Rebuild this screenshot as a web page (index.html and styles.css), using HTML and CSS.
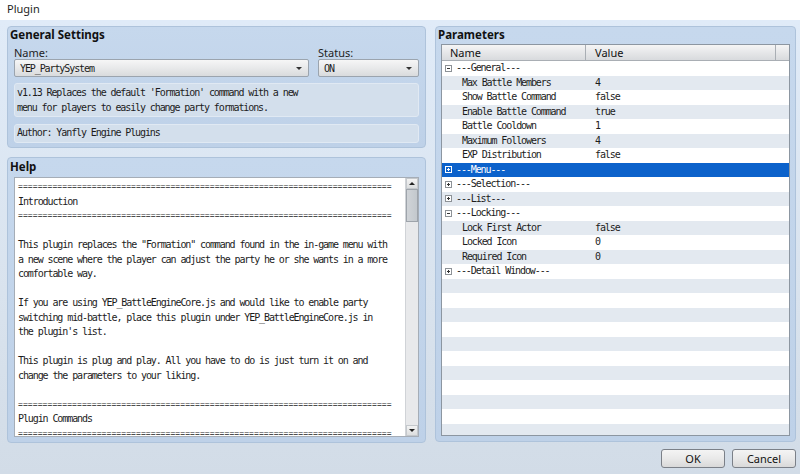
FILE: index.html
```html
<!DOCTYPE html>
<html>
<head>
	<meta charset="UTF-8">
	<title>Plugin</title>
	<link rel="stylesheet" href="styles.css">
</head>
<body>
	<div class="titlebar">Plugin</div>
	<div class="client">
		<div class="columns">
			<div class="left">
				<section class="group general">
					<div class="group-title">General Settings</div>
					<div class="fields">
						<div class="field name-field">
							<div class="label">Name:</div>
							<div class="combo mono">YEP_PartySystem<span class="arrow"></span></div>
						</div>
						<div class="field status-field">
							<div class="label">Status:</div>
							<div class="combo mono">ON<span class="arrow"></span></div>
						</div>
					</div>
					<div class="box desc mono">v1.13 Replaces the default 'Formation' command with a new<br>menu for players to easily change party formations.</div>
					<div class="box author mono">Author: Yanfly Engine Plugins</div>
				</section>
				<section class="group help">
					<div class="group-title">Help</div>
					<div class="helpbox">
<pre class="helptext mono"><span class="rule">============================================================================</span>
Introduction
<span class="rule">============================================================================</span>

This plugin replaces the "Formation" command found in the in-game menu with
a new scene where the player can adjust the party he or she wants in a more
comfortable way.

If you are using YEP_BattleEngineCore.js and would like to enable party
switching mid-battle, place this plugin under YEP_BattleEngineCore.js in
the plugin's list.

This plugin is plug and play. All you have to do is just turn it on and
change the parameters to your liking.

<span class="rule">============================================================================</span>
Plugin Commands
<span class="rule">============================================================================</span></pre>
						<div class="scrollbar">
							<div class="sb-btn"><span class="tri-up"></span></div>
							<div class="sb-thumb"></div>
							<div class="sb-track"></div>
							<div class="sb-btn"><span class="tri-down"></span></div>
						</div>
					</div>
				</section>
			</div>
			<div class="right">
				<section class="group params">
					<div class="group-title">Parameters</div>
					<div class="tree">
						<div class="tree-head">
							<div class="h-name">Name</div>
							<div class="h-value">Value</div>
							<div class="h-rest"></div>
						</div>
						<div class="rows mono">
							<div class="row"><div class="c-name"><span class="exp minus"></span>---General---</div><div class="c-value"></div></div>
							<div class="row"><div class="c-name child">Max Battle Members</div><div class="c-value">4</div></div>
							<div class="row"><div class="c-name child">Show Battle Command</div><div class="c-value">false</div></div>
							<div class="row"><div class="c-name child">Enable Battle Command</div><div class="c-value">true</div></div>
							<div class="row"><div class="c-name child">Battle Cooldown</div><div class="c-value">1</div></div>
							<div class="row"><div class="c-name child">Maximum Followers</div><div class="c-value">4</div></div>
							<div class="row"><div class="c-name child">EXP Distribution</div><div class="c-value">false</div></div>
							<div class="row selected"><div class="c-name"><span class="exp plus"></span>---Menu---</div><div class="c-value"></div></div>
							<div class="row"><div class="c-name"><span class="exp plus"></span>---Selection---</div><div class="c-value"></div></div>
							<div class="row"><div class="c-name"><span class="exp plus"></span>---List---</div><div class="c-value"></div></div>
							<div class="row"><div class="c-name"><span class="exp minus"></span>---Locking---</div><div class="c-value"></div></div>
							<div class="row"><div class="c-name child">Lock First Actor</div><div class="c-value">false</div></div>
							<div class="row"><div class="c-name child">Locked Icon</div><div class="c-value">0</div></div>
							<div class="row"><div class="c-name child">Required Icon</div><div class="c-value">0</div></div>
							<div class="row"><div class="c-name"><span class="exp plus"></span>---Detail Window---</div><div class="c-value"></div></div>
							<div class="row"></div>
							<div class="row"></div>
							<div class="row"></div>
							<div class="row"></div>
							<div class="row"></div>
							<div class="row"></div>
							<div class="row"></div>
							<div class="row"></div>
							<div class="row"></div>
							<div class="row"></div>
							<div class="row"></div>
						</div>
					</div>
				</section>
			</div>
		</div>
		<div class="buttons">
			<button class="btn">OK</button>
			<button class="btn">Cancel</button>
		</div>
	</div>
</body>
</html>
```

FILE: styles.css
```css
body {
	margin: 0;
	width: 800px;
	height: 474px;
	overflow: hidden;
	font-family: "Noto Sans", "Liberation Sans", sans-serif;
	font-size: 11px;
	color: #1e1e1e;
}
.mono {
	font-family: "DejaVu Sans Mono", "Liberation Mono", monospace;
	font-size: 10px;
	letter-spacing: -1.1px;
	color: #1c1c1c;
}
.rule {
	font-size: 8px;
	letter-spacing: 0.1px;
	vertical-align: top;
}
.titlebar {
	height: 20px;
	line-height: 17px;
	padding-left: 7px;
	box-sizing: border-box;
	background: #fff;
}
.client {
	height: 454px;
	box-sizing: border-box;
	padding: 6px 4px 0 7px;
	background: linear-gradient(#e0ebf8, #d9e3ee 60%, #d2dce7);
}
.columns {
	display: flex;
	gap: 9px;
	height: 417px;
}
.left {
	width: 419px;
	display: flex;
	flex-direction: column;
	gap: 9px;
}
.right {
	width: 361px;
}
.group {
	box-sizing: border-box;
	border: 1px solid #aec3db;
	border-radius: 4px;
	background: linear-gradient(#c6d8ed, #bed1e8);
	padding: 1px 6px 0;
}
.group-title {
	font-weight: bold;
	font-size: 11.5px;
	line-height: 14px;
	margin-left: -4px;
	color: #111;
}
.general {
	height: 122px;
}
.help {
	height: 286px;
}
.help .group-title {
	line-height: 15px;
}
.params {
	height: 416px;
	padding: 1px 5px 0;
}
.params .group-title {
	margin-left: -3px;
}

/* general settings */
.fields {
	display: flex;
	gap: 9px;
	margin-top: 4px;
}
.name-field {
	width: 295px;
}
.status-field {
	width: 101px;
}
.label {
	line-height: 13px;
}
.combo {
	height: 18px;
	box-sizing: border-box;
	border: 1px solid #9ba4ae;
	border-radius: 2px;
	background: linear-gradient(#f6f6f6, #e8e9ea 50%, #d9dbdd);
	display: flex;
	align-items: center;
	justify-content: space-between;
	padding: 0 6px 0 5px;
}
.arrow {
	width: 0;
	height: 0;
	border-left: 3px solid transparent;
	border-right: 3px solid transparent;
	border-top: 3px solid #333;
}
.box {
	box-sizing: border-box;
	border: 1px solid #e0e9f3;
	border-radius: 3px;
	background: #d3dfec;
	padding: 2px 2px;
	line-height: 14.5px;
}
.desc {
	height: 34px;
	margin-top: 6px;
}
.author {
	height: 19px;
	margin-top: 7px;
	padding-top: 1px;
}

/* help */
.helpbox {
	margin-top: 3px;
	height: 260px;
	box-sizing: border-box;
	border: 1px solid #a5adb7;
	background: #fff;
	display: flex;
}
.helptext {
	flex: 1;
	margin: 0;
	padding: 2px 0 0 3px;
	line-height: 14.5px;
	overflow: hidden;
}
.scrollbar {
	width: 12px;
	display: flex;
	flex-direction: column;
	background: #e8e9eb;
	border-left: 1px solid #d0d3d7;
}
.sb-btn {
	height: 11px;
	display: flex;
	align-items: center;
	justify-content: center;
	background: linear-gradient(#f3f3f3, #dcdedf);
	border: 1px solid #c4c8cc;
	box-sizing: border-box;
}
.tri-up, .tri-down {
	width: 0;
	height: 0;
	border-left: 3px solid transparent;
	border-right: 3px solid transparent;
}
.tri-up {
	border-bottom: 3px solid #222;
}
.tri-down {
	border-top: 3px solid #222;
}
.sb-thumb {
	height: 33px;
	box-sizing: border-box;
	border: 1px solid #9ea4ab;
	background: linear-gradient(90deg, #d0d4d8, #c3c8cd);
}
.sb-track {
	flex: 1;
}

/* parameters tree */
.tree {
	margin-top: 2px;
	height: 392px;
	box-sizing: border-box;
	border: 1px solid #8c96a1;
	background: #fff;
	overflow: hidden;
}
.tree-head {
	display: flex;
	height: 16px;
	line-height: 15px;
	background: linear-gradient(#f5f5f5, #e6e7e9 50%, #d8dadd);
	border-bottom: 1px solid #a9aeb4;
	box-sizing: border-box;
	color: #111;
}
.h-name {
	width: 144px;
	padding-left: 8px;
	box-sizing: border-box;
	border-right: 1px solid #a9aeb4;
}
.h-value {
	width: 190px;
	padding-left: 9px;
	box-sizing: border-box;
	border-right: 1px solid #a9aeb4;
}
.h-rest {
	flex: 1;
}
.row {
	display: flex;
	height: 14.5px;
	line-height: 14.5px;
	white-space: nowrap;
}
.row:nth-child(even) {
	background: #e3e9f0;
}
.row.selected {
	background: #0c62cb;
	color: #fff;
}
.c-name {
	width: 144px;
	flex: none;
	box-sizing: border-box;
	display: flex;
	align-items: center;
}
.c-name.child {
	padding-left: 20px;
}
.c-value {
	padding-left: 9px;
}
.exp {
	width: 7px;
	height: 7px;
	box-sizing: border-box;
	border: 1px solid #8d9297;
	background: #fff;
	margin: 0 4px 0 3px;
	position: relative;
}
.exp::before {
	content: "";
	position: absolute;
	left: 1px;
	top: 2px;
	width: 3px;
	height: 1px;
	background: #333;
}
.exp.plus::after {
	content: "";
	position: absolute;
	left: 2px;
	top: 1px;
	width: 1px;
	height: 3px;
	background: #333;
}
.selected .exp {
	border-color: #fff;
	background: #0c62cb;
}
.selected .exp::before, .selected .exp::after {
	background: #fff;
}

/* buttons */
.buttons {
	display: flex;
	justify-content: flex-end;
	gap: 7px;
	margin-top: 6px;
}
.btn {
	width: 64px;
	height: 19px;
	padding: 0;
	font-family: inherit;
	font-size: 11px;
	color: #111;
	border: 1px solid #7b8088;
	border-radius: 3px;
	background: linear-gradient(#f4f4f4, #e9e9e9 50%, #d9d9d9);
}
```
